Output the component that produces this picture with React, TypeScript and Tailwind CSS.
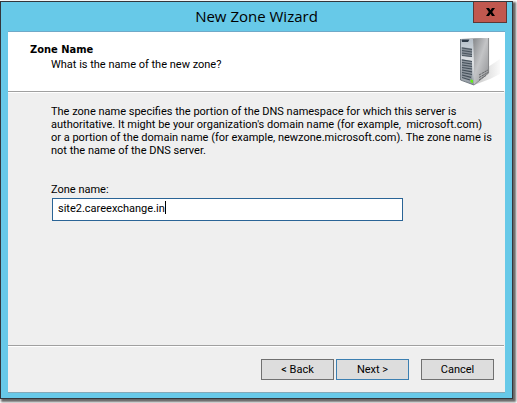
import React, { useState } from 'react'

const uiFont = "font-['Roboto',sans-serif]"
const buttonClass = "h-[21px] w-[73px] border bg-[#dddddd] text-[11px] leading-[13px] text-black"

function ServerIcon() {
    return (
        <svg width="40" height="50" viewBox="0 0 40 50" aria-hidden="true">
            <defs>
                <linearGradient id="side" x1="0" y1="0" x2="1" y2="1">
                    <stop offset="0" stopColor="#85878a" />
                    <stop offset="0.45" stopColor="#c3c4c6" />
                    <stop offset="1" stopColor="#8b8c8f" />
                </linearGradient>
                <linearGradient id="front" x1="0" y1="0" x2="0" y2="1">
                    <stop offset="0" stopColor="#b4bec8" />
                    <stop offset="0.5" stopColor="#e2e5e8" />
                    <stop offset="1" stopColor="#8b939c" />
                </linearGradient>
                <linearGradient id="shade" x1="0" y1="0" x2="1" y2="0">
                    <stop offset="0" stopColor="#c4c4c4" />
                    <stop offset="0.6" stopColor="#e6e6e6" />
                    <stop offset="1" stopColor="#fafafa" />
                </linearGradient>
            </defs>
            <path d="M14 48 L30 42 L40 37 V22 L28 30 Z" fill="url(#shade)" />
            <path d="M0 2 L15 1 H29 L13 3 Z" fill="#a9abad" />
            <path d="M13 2 L29 1 V36 L14 48 Z" fill="url(#side)" />
            <path d="M28.6 1 V36 L14 48" fill="none" stroke="#77787a" strokeWidth="0.7" />
            <path d="M0 2 L13 2 L14 48 L1 43 Z" fill="url(#front)" />
            <path d="M0.5 2 V43 L14 48" fill="none" stroke="#69727b" strokeWidth="0.9" />
            <path d="M1.5 2.5 H9.5 L8 5 H2 Z" fill="#2f3b48" />
            <path d="M1.5 10 L12 11.5 V20 L1.5 18.5 Z" fill="#868e97" />
            <path d="M2 11 L12 12.5 M2 13.5 L12 15 M2 16 L12 17.5 M2 18.5 L12 19.5" stroke="#4a555f" strokeWidth="1.2" />
            <path d="M1.5 22 L12 24 V43.5 L1.5 40 Z" fill="#8c949d" />
            <path d="M2 23 L12 24.5 M2 25.5 L12 27 M2 28 L12 29.5 M2 30.5 L12 32 M2 33 L12 34.8 M2 35.5 L12 37.5 M2 38 L11 40.3 M2 40.5 L10 43" stroke="#444f59" strokeWidth="1.2" />
            <path d="M10.5 42.5 L13 43 V46 L10.5 45.2 Z" fill="#63ee16" />
            <path d="M19 38 L28 33 M19 40.5 L28 35.5 M19 43 L26 38.5" stroke="#66686a" strokeWidth="1" strokeDasharray="2.5 0.6" />
        </svg>
    )
}

export default function App() {
    const [zoneName, setZoneName] = useState('site2.careexchange.in')

    return (
        <div className={`flex min-h-screen flex-col bg-white pt-px pr-1 pb-1 text-[11px] leading-[13px] text-black ${uiFont}`}>
            <div className="flex flex-1 flex-col border border-[#33363b] bg-[#67c9e8] px-[7px] pb-[5px] shadow-[2px_2px_2px_1px_rgba(0,0,0,0.6)]">
                {/* Title bar */}
                <header className="relative h-[29px] shrink-0">
                    <h1 className="text-center font-['Open_Sans',sans-serif] text-[15px] leading-7">New Zone Wizard</h1>
                    <button type="button" aria-label="Close" className="absolute top-0 -right-0.5 flex h-[21px] w-[34px] items-center justify-center border border-t-0 border-[#5d3836] bg-[#c1584f]">
                        <svg width="9" height="8" viewBox="0 0 9 8" aria-hidden="true">
                            <path d="M0 0h3l1.5 2.2L6 0h3L6.2 4 9 8H6L4.5 5.8 3 8H0l2.8-4z" fill="#000" />
                        </svg>
                    </button>
                </header>

                <main className="flex flex-1 flex-col border-t border-b border-t-[#70a9c8] border-b-[#83a9b8] bg-[#efefef]">
                    {/* Page heading */}
                    <div className="flex h-[59px] shrink-0 justify-between bg-white pt-[5px] pr-[5px] pl-[22px]">
                        <div className="pt-[6px]">
                            <h2 className="font-['DejaVu_Sans_Condensed',sans-serif] font-bold leading-[14px]">Zone Name</h2>
                            <p className="pl-[21px] leading-[15px]">What is the name of the new zone?</p>
                        </div>
                        <ServerIcon />
                    </div>
                    <div className="mr-px h-0.5 shrink-0 border-t border-b border-t-[#a0a0a0] border-b-white" />

                    {/* Page body */}
                    <div className="flex-1 pt-3 pl-[43px]">
                        <p className="whitespace-nowrap">
                            The zone name specifies the portion of the DNS namespace for which this server is<br />
                            authoritative. It might be your organization's domain name (for example,&nbsp; microsoft.com)<br />
                            or a portion of the domain name (for example, newzone.microsoft.com). The zone name is<br />
                            not the name of the DNS server.
                        </p>
                        <label htmlFor="zone" className="mt-[26px] block">Zone name:</label>
                        <div className="relative mt-[2px] mr-[102px] ml-px">
                            <input
                                id="zone"
                                type="text"
                                value={zoneName}
                                onChange={(e) => setZoneName(e.target.value)}
                                className="block h-[23px] w-full border border-[#2a6496] bg-white px-[5px] pb-[2px] outline-none"
                            />
                            <span className="absolute top-[3px] left-[113px] h-[13px] w-px bg-black" />
                        </div>
                    </div>

                    {/* Wizard buttons */}
                    <div className="mr-px h-0.5 shrink-0 border-t border-b border-t-[#a0a0a0] border-b-white" />
                    <div className="flex h-[45px] shrink-0 items-center justify-end gap-[2px] pr-[11px]">
                        <button type="button" className={`${buttonClass} border-[#707070]`}>&lt; Back</button>
                        <button type="button" className={`${buttonClass} border-[#3c7fb1]`}>Next &gt;</button>
                        <button type="button" className={`${buttonClass} ml-[10px] border-[#707070]`}>Cancel</button>
                    </div>
                </main>
            </div>
        </div>
    )
}
